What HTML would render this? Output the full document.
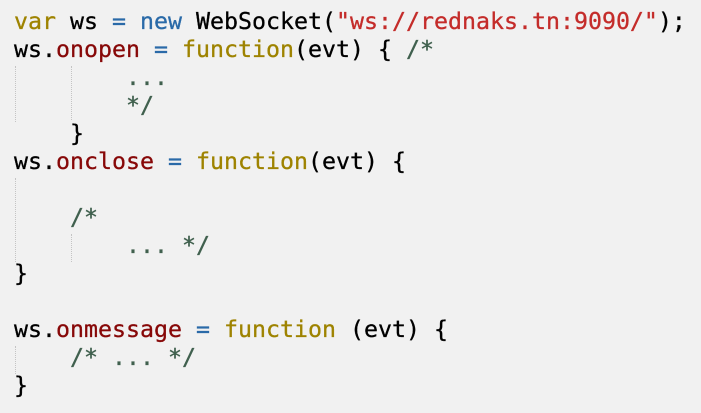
<!DOCTYPE html>
<html><head><style>
html,body{margin:0;padding:0;background:#f1f1f1;width:701px;height:413px;overflow:hidden}
pre{position:absolute;left:14px;top:8px;margin:0;font-family:"DejaVu Sans Mono","Liberation Mono",monospace;font-size:23.25px;line-height:28px;color:#000;-webkit-text-stroke:0.3px currentColor}
.k{color:#9e8300}.b{color:#2a6aa8}.s{color:#c42c2a}.p{color:#870808}.c{color:#40604e}
.g{position:absolute;width:0;border-left:1px dotted #c4c4c4}
</style></head><body>
<div class="g" style="left:15px;top:66px;height:56px"></div>
<div class="g" style="left:71px;top:66px;height:54px"></div>
<div class="g" style="left:15px;top:178px;height:84px"></div>
<div class="g" style="left:71px;top:234px;height:28px"></div>
<div class="g" style="left:15px;top:346px;height:28px"></div>
<pre><span class="k">var</span> ws <span class="b">=</span> <span class="b">new</span> WebSocket(<span class="s">"ws://rednaks.tn:9090/"</span>);
ws.<span class="p">onopen</span> <span class="b">=</span> <span class="k">function</span>(evt) { <span class="c">/*</span>
<span class="c">        ...</span>
<span class="c">        */</span>
    }
ws.<span class="p">onclose</span> <span class="b">=</span> <span class="k">function</span>(evt) {

    <span class="c">/*</span>
<span class="c">        ... */</span>
}

ws.<span class="p">onmessage</span> <span class="b">=</span> <span class="k">function</span> (evt) {
    <span class="c">/* ... */</span>
}</pre>
</body></html>
